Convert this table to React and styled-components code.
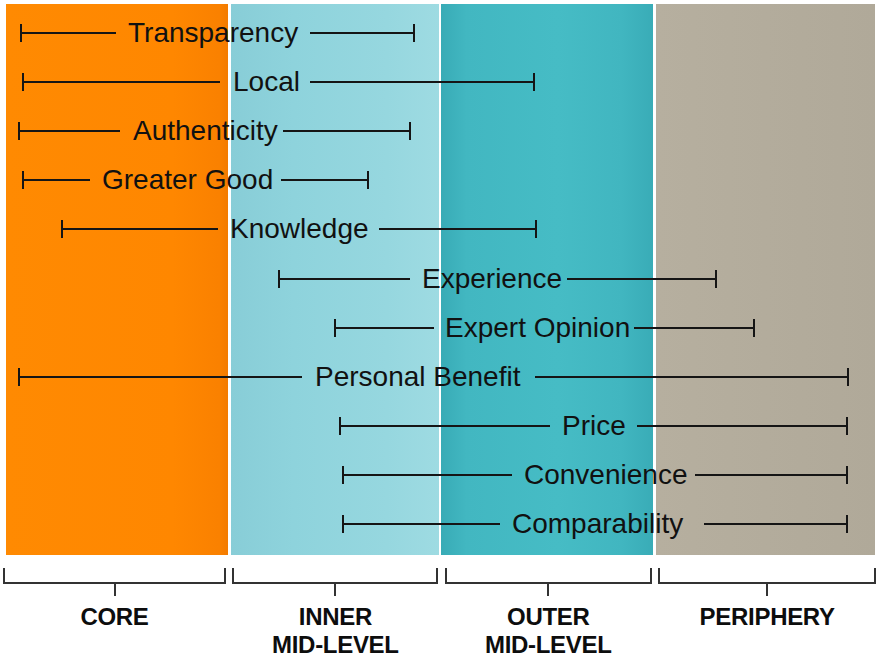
import React from 'react';
import styled, { createGlobalStyle } from 'styled-components';

const GlobalStyle = createGlobalStyle`
  html, body {
    margin: 0;
    padding: 0;
    background: #ffffff;
  }
  body {
    font-family: "Liberation Sans", Arial, sans-serif;
    color: #111111;
  }
`;

const ZONES = [
  { key: 'core', width: 222, title: ['CORE'] },
  { key: 'inner', width: 208, title: ['INNER', 'MID-LEVEL'] },
  { key: 'outer', width: 212, title: ['OUTER', 'MID-LEVEL'] },
  { key: 'periphery', width: 219, title: ['PERIPHERY'] },
];

// x positions taken from the page, relative to the window
const RANGES = [
  { label: 'Transparency', start: 20, lineEnd: 116, textStart: 128, gap: 12, end: 413 },
  { label: 'Local', start: 22, lineEnd: 220, textStart: 233, gap: 10, end: 533 },
  { label: 'Authenticity', start: 18, lineEnd: 120, textStart: 133, gap: 5, end: 409 },
  { label: 'Greater Good', start: 22, lineEnd: 90, textStart: 102, gap: 8, end: 367 },
  { label: 'Knowledge', start: 61, lineEnd: 218, textStart: 230, gap: 10, end: 535 },
  { label: 'Experience', start: 278, lineEnd: 410, textStart: 422, gap: 5, end: 715 },
  { label: 'Expert Opinion', start: 334, lineEnd: 434, textStart: 445, gap: 4, end: 753 },
  { label: 'Personal Benefit', start: 18, lineEnd: 302, textStart: 315, gap: 15, end: 847 },
  { label: 'Price', start: 339, lineEnd: 550, textStart: 562, gap: 11, end: 846 },
  { label: 'Convenience', start: 342, lineEnd: 512, textStart: 524, gap: 8, end: 846 },
  { label: 'Comparability', start: 342, lineEnd: 500, textStart: 512, gap: 21, end: 846 },
];

const CHART_LEFT = 6;

const Page = styled.div`
  width: 880px;
  height: 659px;
  overflow: hidden;
  padding-top: 4px;
  box-sizing: border-box;
`;

const Chart = styled.div`
  display: grid;
  margin-left: ${CHART_LEFT}px;
  width: 869px;
  height: 551px;
`;

const ZoneLayer = styled.div`
  grid-area: 1 / 1;
  display: flex;
  gap: 3px;
`;

const zoneFills = {
  core: 'linear-gradient(90deg, #ff8a02 0%, #ff8700 75%, #fa8100 96%, #f37b00 100%)',
  inner: 'linear-gradient(90deg, #88cdd7 0%, #8ed3dc 30%, #96d7df 75%, #9edbe2 100%)',
  outer: 'linear-gradient(90deg, #38abb6 0%, #42b7c1 12%, #46bcc5 55%, #41b6c0 85%, #39acb7 100%)',
  periphery: 'linear-gradient(90deg, #b6af9f 0%, #b3ac9c 50%, #b0a999 100%)',
};

const Zone = styled.div`
  width: ${(p) => p.$width}px;
  background: ${(p) => zoneFills[p.$kind]};
  &:nth-child(2) {
    margin-right: -1px;
  }
`;

const RangeLayer = styled.div`
  grid-area: 1 / 1;
  display: flex;
  flex-direction: column;
  padding-top: 4px;
`;

const RangeRow = styled.div`
  display: flex;
  align-items: center;
  height: 49.2px;
  margin-left: ${(p) => p.$start - CHART_LEFT}px;
  width: ${(p) => p.$width}px;
`;

const Tick = styled.span`
  flex: none;
  width: 2px;
  height: 18px;
  background: #151515;
`;

const Line = styled.span`
  height: 2px;
  background: #151515;
  flex: ${(p) => (p.$fill ? '1 1 auto' : 'none')};
  width: ${(p) => (p.$fill ? 'auto' : `${p.$length}px`)};
  margin-left: ${(p) => p.$offset || 0}px;
`;

const RangeLabel = styled.span`
  flex: none;
  font-size: 28px;
  line-height: 1;
  white-space: nowrap;
  color: #111111;
  margin-left: ${(p) => p.$offset}px;
`;

const Legend = styled.div`
  display: grid;
  grid-template-columns: 223px 206px 207px 218px;
  column-gap: 6.4px;
  margin-left: 3px;
  margin-top: 13px;
`;

const LegendItem = styled.div`
  display: flex;
  flex-direction: column;
  align-items: center;
`;

const Bracket = styled.div`
  align-self: stretch;
  height: 14px;
  border: 2px solid #333333;
  border-top: none;
`;

const BracketStem = styled.div`
  width: 2px;
  height: 12px;
  background: #333333;
`;

const ZoneTitle = styled.div`
  margin-top: 7px;
  font-size: 24px;
  line-height: 28px;
  font-weight: 700;
  text-align: center;
  color: #0d0d0d;
  letter-spacing: -0.3px;
`;

const Range = ({ label, start, lineEnd, textStart, gap, end }) => (
  <RangeRow $start={start} $width={end - start + 2}>
    <Tick />
    <Line $length={lineEnd - start - 2} />
    <RangeLabel $offset={textStart - lineEnd}>{label}</RangeLabel>
    <Line $fill $offset={gap} />
    <Tick />
  </RangeRow>
);

export default function App() {
  return (
    <Page>
      <GlobalStyle />
      <Chart>
        <ZoneLayer>
          {ZONES.map((z) => (
            <Zone key={z.key} $kind={z.key} $width={z.width} />
          ))}
        </ZoneLayer>
        <RangeLayer>
          {RANGES.map((r) => (
            <Range key={r.label} {...r} />
          ))}
        </RangeLayer>
      </Chart>
      <Legend>
        {ZONES.map((z) => (
          <LegendItem key={z.key}>
            <Bracket />
            <BracketStem />
            <ZoneTitle>
              {z.title.map((line) => (
                <div key={line}>{line}</div>
              ))}
            </ZoneTitle>
          </LegendItem>
        ))}
      </Legend>
    </Page>
  );
}
